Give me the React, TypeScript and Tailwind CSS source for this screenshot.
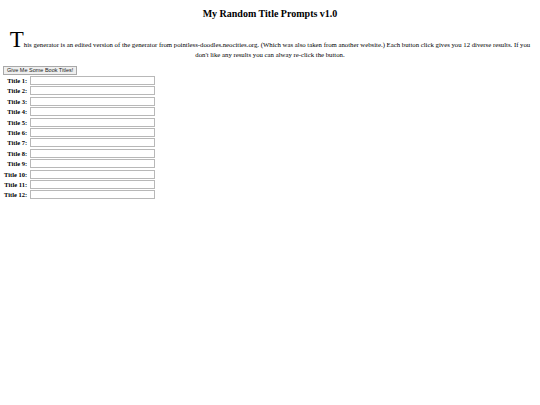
import React from 'react';

const rows = Array.from({ length: 12 }, (_, i) => i + 1);

export default function App() {
  return (
    <div className="min-h-[405px] bg-white text-black font-['Liberation_Serif',serif]">
      <h1 className="pt-[7px] text-center text-[10px] font-bold leading-[14px]">My Random Title Prompts v1.0</h1>

      <p className="mt-[10px] px-[8px] text-center text-[6.75px] leading-[10px]">
        <span className="text-[23px] leading-[18px]">T</span>
        his generator is an edited version of the generator from pointless-doodles.neocities.org. (Which was also taken from another website.) Each button click gives you 12 diverse results. If you don't like any results you can alway re-click the button.
      </p>

      <div className="pt-[6px] pl-[3px]">
        <button className="block h-[9px] border border-[#a9a9a9] bg-[#efefef] px-[3px] font-['Liberation_Sans',sans-serif] text-[5.5px] leading-[7px] text-[#222]">
          Give Me Some Book Titles!
        </button>
      </div>

      <div className="mt-[1px] grid grid-cols-[auto_125px] w-max gap-x-[3px] gap-y-[1.4px] pl-[4px] items-center">
        {rows.map((n) => (
          <React.Fragment key={n}>
            <span className="text-right text-[6.5px] font-bold leading-[9px] whitespace-nowrap">Title {n}:</span>
            <input
              type="text"
              className="block h-[9px] w-[125px] border border-[#b8b8b8] bg-white"
              readOnly
            />
          </React.Fragment>
        ))}
      </div>
    </div>
  );
}
